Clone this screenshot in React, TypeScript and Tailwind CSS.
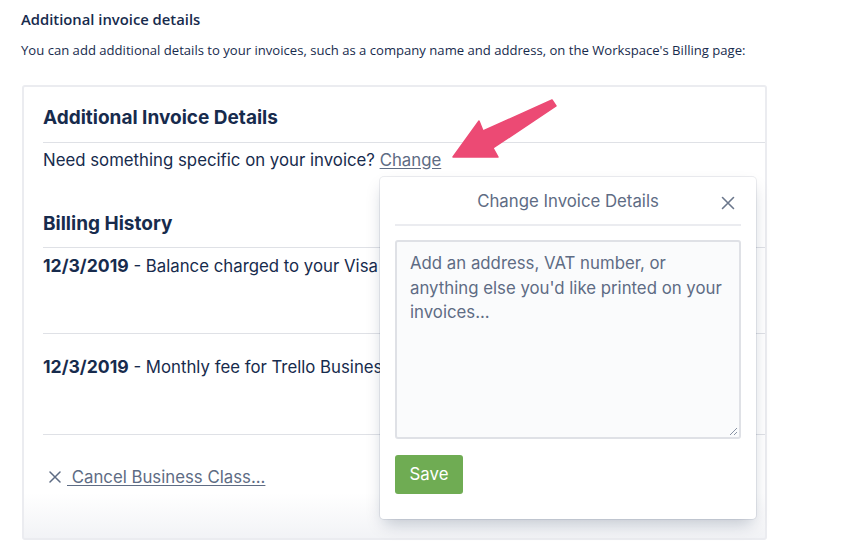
import React from "react";

const inner = { fontFamily: "Inter, 'Liberation Sans', sans-serif" };
const outer = { fontFamily: "'Open Sans', 'Noto Sans', sans-serif" };

export default function App() {
  return (
    <div className="relative w-[868px] h-[557px] bg-white overflow-hidden">
      <div className="pl-[21px] pt-[9px]" style={outer}>
        <h3 className="text-[14.8px] leading-[20px] font-semibold text-[#172b4d]">Additional invoice details</h3>
        <p className="mt-[11px] text-[13.1px] leading-[20px] text-[#172b4d]">
          You can add additional details to your invoices, such as a company name and address, on the Workspace's Billing page:
        </p>
      </div>

      <div
        className="relative ml-[22px] mt-[25px] w-[745px] h-[455px] border-2 border-[#ebecf0] rounded-[3px] overflow-hidden bg-[linear-gradient(to_bottom,#ffffff_90%,#f2f3f6)]"
        style={inner}
      >
        <div className="pl-[19px] text-[#172b4d]">
          <div className="pt-[19px] pb-[12px] border-b border-[#dfe1e6]">
            <h2 className="text-[19px] leading-[24px] font-bold">Additional Invoice Details</h2>
          </div>
          <p className="pt-[5px] text-[16.8px] leading-[24px]">
            Need something specific on your invoice?{" "}
            <span className="underline text-[#5e6c84] underline-offset-2">Change</span>
          </p>
          <div className="mt-[40px] pb-[11px] border-b border-[#dfe1e6]">
            <h2 className="text-[19px] leading-[24px] font-bold">Billing History</h2>
          </div>
          <div className="h-[86px] pt-[6px] border-b border-[#dfe1e6] whitespace-nowrap text-[16.8px] leading-[24px]">
            <span className="font-bold text-[17.6px]">12/3/2019</span> - Balance charged to your Visa ending in 4242
          </div>
          <div className="h-[101px] pt-[21px] border-b border-[#dfe1e6] whitespace-nowrap text-[16.8px] leading-[24px]">
            <span className="font-bold text-[17.6px]">12/3/2019</span> - Monthly fee for Trello Business Class for your Workspace
          </div>
          <div className="pt-[30px] flex items-center text-[16.8px] leading-[24px] text-[#5e6c84]">
            <svg width="12" height="12" viewBox="0 0 12 12" className="ml-[6px] mr-[6px]">
              <path d="M1 1 L11 11 M11 1 L1 11" stroke="#5e6c84" strokeWidth="1.5" strokeLinecap="round" />
            </svg>
            <span className="underline underline-offset-2">&nbsp;Cancel Business Class...</span>
          </div>
        </div>
      </div>

      {/* Popover */}
      <div
        className="absolute left-[380px] top-[177px] w-[376px] h-[342px] bg-white rounded-[4px] px-[15px] shadow-[0_8px_16px_-4px_rgba(9,30,66,0.25),0_0_0_1px_rgba(9,30,66,0.08)]"
        style={inner}
      >
        <div className="relative h-[49px] pt-[3px] flex items-center justify-center border-b-2 border-[#ebecf0]">
          <span className="text-[16.8px] text-[#5e6c84]">Change Invoice Details</span>
          <svg width="14" height="14" viewBox="0 0 14 14" className="absolute right-[6px] top-[19px]">
            <path d="M1.5 1.5 L12.5 12.5 M12.5 1.5 L1.5 12.5" stroke="#6b778c" strokeWidth="1.6" strokeLinecap="round" />
          </svg>
        </div>
        <div className="mt-[14px] h-[199px] bg-[#fafbfc] border-2 border-[#dfe1e6] rounded-[3px] pl-[13px] pr-[10px] pt-[9px] text-[16.8px] leading-[24.5px] text-[#5e6c84] relative">
          Add an address, VAT number, or anything else you'd like printed on your invoices...
          <svg width="10" height="10" viewBox="0 0 10 10" className="absolute right-[1px] bottom-[1px]">
            <path d="M9 2 L2 9 M9 6 L6 9" stroke="#8993a4" strokeWidth="1" />
          </svg>
        </div>
        <button className="mt-[16px] h-[39px] w-[68px] rounded-[3px] bg-[#6fac53] text-white text-[16.8px]">Save</button>
      </div>

      {/* Arrow */}
      <svg className="absolute left-0 top-0 pointer-events-none" width="868" height="557">
        <polygon
          points="453,157 479,121 483,131 552,100 556,106 493,148 498,157"
          fill="#ec4a74"
          stroke="#ec4a74"
          strokeWidth="1.5"
          strokeLinejoin="round"
        />
      </svg>
    </div>
  );
}
